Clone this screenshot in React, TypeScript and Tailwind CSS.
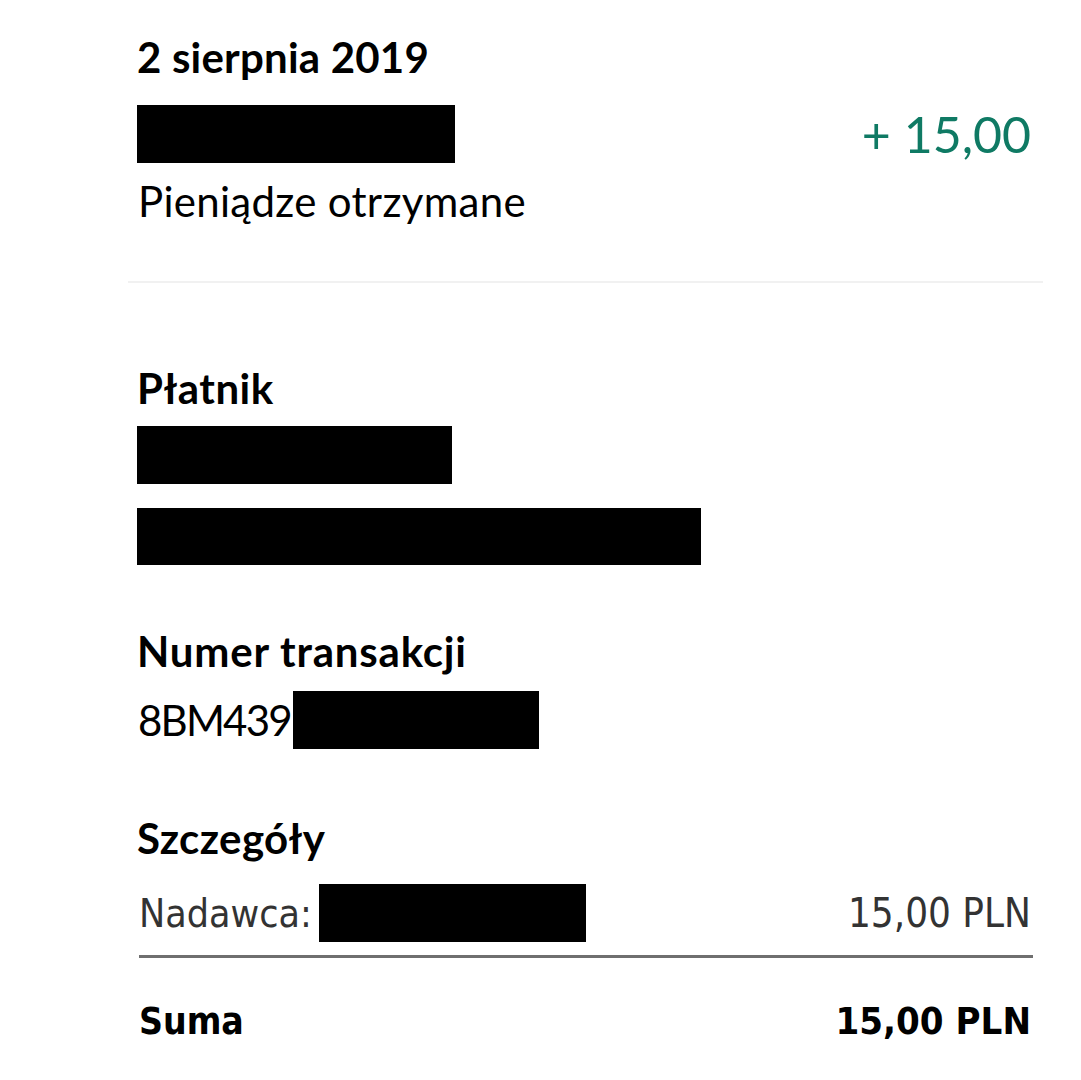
import React from 'react';

const Redacted = ({ className }: { className: string }) => (
  <div className={`bg-black ${className}`} />
);

export default function App() {
  return (
    <div
      className="w-[1081px] h-[1080px] overflow-hidden bg-white text-black pl-[137px] pr-[50px]"
      style={{ fontFamily: 'Lato, "Noto Sans", sans-serif' }}
    >
      {/* nagłówek */}
      <div className="mt-[26px] h-[62px] flex items-center">
        <span className="text-[42px] leading-[42px] font-bold tracking-[0.2px]">2 sierpnia 2019</span>
      </div>
      <div className="mt-[17px] h-[58px] flex items-center justify-between">
        <Redacted className="w-[318px] h-[58px]" />
        <span className="text-[50px] leading-[50px] text-[#0f7a64]">+ 15,00</span>
      </div>
      <div className="mt-[17px] h-[42px] flex items-center">
        <span className="text-[42px] leading-[42px] ml-[1px] tracking-[0.3px]">Pieniądze otrzymane</span>
      </div>

      <div className="mt-[59px] h-[2px] bg-[#f1f1f1] -ml-[9px] -mr-[12px]" />

      {/* płatnik */}
      <div className="mt-[84px] h-[42px] flex items-center">
        <span className="text-[42px] leading-[42px] font-bold tracking-[0.5px]">Płatnik</span>
      </div>
      <Redacted className="mt-[17px] w-[315px] h-[58px]" />
      <Redacted className="mt-[24px] w-[564px] h-[57px]" />

      {/* numer transakcji */}
      <div className="mt-[65px] h-[42px] flex items-center">
        <span className="text-[42px] leading-[42px] font-bold tracking-[0.8px]">Numer transakcji</span>
      </div>
      <div className="mt-[19px] h-[58px] flex items-center">
        <span className="text-[42px] leading-[42px] ml-[1px] tracking-[-1.8px]">8BM439</span>
        <Redacted className="w-[246px] h-[58px] ml-[2px]" />
      </div>

      {/* szczegóły */}
      <div className="mt-[68px] h-[42px] flex items-center">
        <span className="text-[42px] leading-[42px] font-bold tracking-[0.4px]">Szczegóły</span>
      </div>
      <div
        className="mt-[25px] h-[58px] flex items-center justify-between text-[#333333]"
        style={{ fontFamily: '"DejaVu Sans Condensed", "Roboto", sans-serif' }}
      >
        <div className="flex items-center">
          <span className="text-[39px] leading-[39px] ml-[2px]">Nadawca:</span>
          <Redacted className="w-[267px] h-[58px] ml-[7px]" />
        </div>
        <span className="text-[40px] leading-[40px]">15,00 PLN</span>
      </div>
      <div className="mt-[13px] h-[3px] bg-[#6f6f6f] ml-[2px] -mr-[2px]" />
      <div
        className="mt-[42px] h-[42px] flex items-center justify-between font-bold"
        style={{ fontFamily: '"DejaVu Sans Condensed", "Roboto", sans-serif' }}
      >
        <span className="text-[37px] leading-[37px] ml-[2px]">Suma</span>
        <span className="text-[38px] leading-[38px]">15,00 PLN</span>
      </div>
    </div>
  );
}
